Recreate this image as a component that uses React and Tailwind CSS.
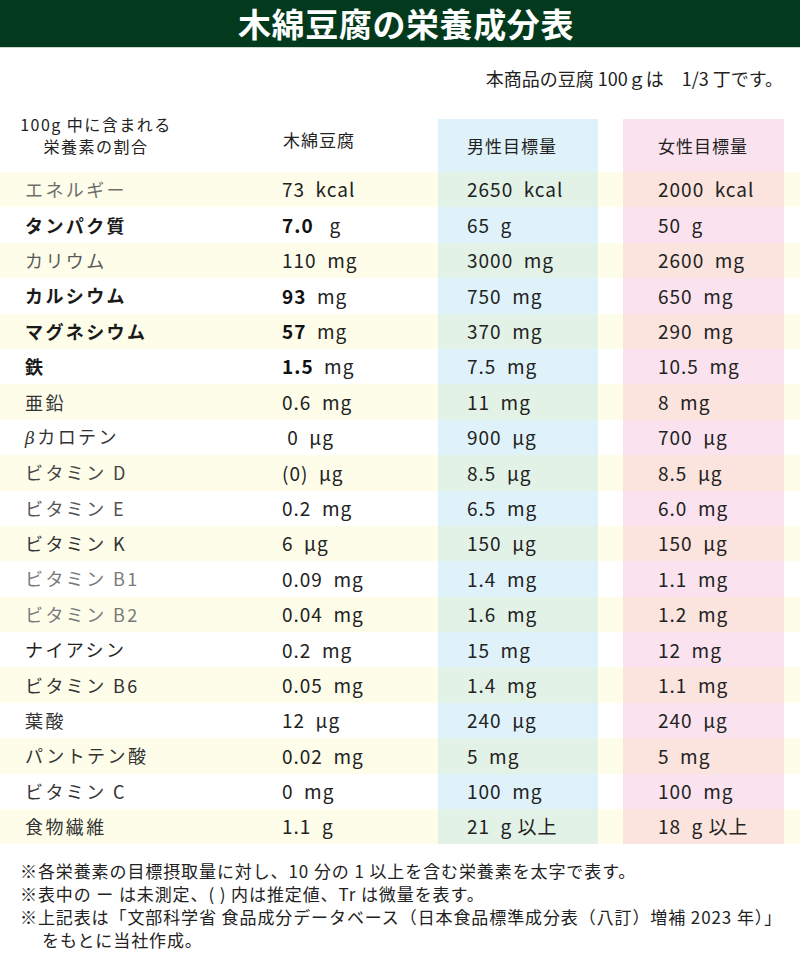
import React from "react";

const rows = [
  { name: "エネルギー", nc: "text-[#6f6f6f]", v: "73  kcal", m: "2650  kcal", f: "2000  kcal" },
  { name: "タンパク質", bold: true, vb: "7.0", vu: "   g", m: "65  g", f: "50  g" },
  { name: "カリウム", nc: "text-[#5a5a5a]", v: "110  mg", m: "3000  mg", f: "2600  mg" },
  { name: "カルシウム", bold: true, vb: "93", vu: "  mg", m: "750  mg", f: "650  mg" },
  { name: "マグネシウム", bold: true, vb: "57", vu: "  mg", m: "370  mg", f: "290  mg" },
  { name: "鉄", bold: true, vb: "1.5", vu: "  mg", m: "7.5  mg", f: "10.5  mg" },
  { name: "亜鉛", v: "0.6  mg", m: "11  mg", f: "8  mg" },
  { name: "βカロテン", beta: true, v: " 0  µg", m: "900  µg", f: "700  µg" },
  { name: "ビタミン D", nc: "text-[#444]", v: "(0)  µg", m: "8.5  µg", f: "8.5  µg" },
  { name: "ビタミン E", nc: "text-[#555]", v: "0.2  mg", m: "6.5  mg", f: "6.0  mg" },
  { name: "ビタミン K", v: "6  µg", m: "150  µg", f: "150  µg" },
  { name: "ビタミン B1", nc: "text-[#7a7a7a]", v: "0.09  mg", m: "1.4  mg", f: "1.1  mg" },
  { name: "ビタミン B2", nc: "text-[#7a7a7a]", v: "0.04  mg", m: "1.6  mg", f: "1.2  mg" },
  { name: "ナイアシン", nc: "text-[#222]", v: "0.2  mg", m: "15  mg", f: "12  mg" },
  { name: "ビタミン B6", v: "0.05  mg", m: "1.4  mg", f: "1.1  mg" },
  { name: "葉酸", v: "12  µg", m: "240  µg", f: "240  µg" },
  { name: "パントテン酸", v: "0.02  mg", m: "5  mg", f: "5  mg" },
  { name: "ビタミン C", v: "0  mg", m: "100  mg", f: "100  mg" },
  { name: "食物繊維", v: "1.1  g", m: "21  g 以上", f: "18  g 以上" },
];

function Row({ r, i }) {
  const odd = i % 2 === 0;
  return (
    <div className={`flex h-[35.4px] items-center ${odd ? "bg-[#fdfdea]" : "bg-white"}`}>
      <div
        className={`w-[270px] pl-[25px] text-[18px] tracking-[2.4px] whitespace-pre ${
          r.bold ? "font-bold text-[#1a1a1a]" : r.nc || "text-[#333]"
        }`}
      >
        {r.beta ? (
          <>
            <span className="italic font-['DejaVu_Serif',serif] text-[17px]">β</span>
            {r.name.slice(1)}
          </>
        ) : (
          r.name
        )}
      </div>
      <div className="w-[168px] pl-[12px] text-[19px] tracking-[1px] whitespace-pre text-[#222]">
        {r.bold ? (
          <>
            <span className="font-bold text-[#111]">{r.vb}</span>
            {r.vu}
          </>
        ) : (
          r.v
        )}
      </div>
      <div
        className={`w-[160px] h-full flex items-center pl-[29px] text-[19px] tracking-[1px] whitespace-pre text-[#222] ${
          odd ? "bg-[#e3f2e7]" : "bg-[#dff2fa]"
        }`}
      >
        {r.m}
      </div>
      <div className="w-[25px]" />
      <div
        className={`w-[161px] h-full flex items-center pl-[35px] text-[19px] tracking-[1px] whitespace-pre text-[#222] ${
          odd ? "bg-[#fbe3de]" : "bg-[#fae3ee]"
        }`}
      >
        {r.f}
      </div>
    </div>
  );
}

export default function App() {
  return (
    <div className="w-[800px] h-[958px] bg-white overflow-hidden font-['Noto_Sans_CJK_JP','Noto_Sans',sans-serif] text-[#222]">
      <div className="h-[48px] bg-[#033a1d] flex items-center justify-center pl-[12px] border-b border-[#cfd8d0]">
        <h1 className="text-white text-[33px] font-bold leading-none tracking-[0.6px]">木綿豆腐の栄養成分表</h1>
      </div>
      <div className="pt-[19px] pb-[22px] pr-[17px] text-right text-[18px] leading-[22px] text-[#222] whitespace-pre">
        本商品の豆腐 100ｇは　1/3 丁です。
      </div>
      <div className="flex h-[61px] items-start text-[17px] leading-[22px] tracking-[1px] text-[#222]">
        <div className="w-[270px]">
          <div className="w-[192px] text-center pt-[2px] text-[16px] tracking-[1.5px]">
            <div className="h-[22px] leading-[22px]">100g 中に含まれる</div>
            <div className="h-[22px] leading-[22px]">栄養素の割合</div>
          </div>
        </div>
        <div className="w-[168px] pl-[13px] pt-[18px]">木綿豆腐</div>
        <div className="w-[160px] mt-[8px] h-[53px] bg-[#dff2fa] pl-[29px] pt-[16px]">男性目標量</div>
        <div className="w-[25px]" />
        <div className="w-[161px] mt-[8px] h-[53px] bg-[#fae3ee] pl-[35px] pt-[16px]">女性目標量</div>
      </div>
      {rows.map((r, i) => (
        <Row key={i} r={r} i={i} />
      ))}
      <div className="pt-[15px] pl-[20px] text-[17px] leading-[23px] text-[#222] whitespace-nowrap tracking-[0.9px]">
        <div className="h-[23px]">※各栄養素の目標摂取量に対し、10 分の 1 以上を含む栄養素を太字で表す。</div>
        <div className="h-[23px]">※表中の ー は未測定、( ) 内は推定値、Tr は微量を表す。</div>
        <div className="h-[23px]">※上記表は「文部科学省 食品成分データベース（日本食品標準成分表（八訂）増補 2023 年）」</div>
        <div className="h-[23px] pl-[22px]">をもとに当社作成。</div>
      </div>
    </div>
  );
}
